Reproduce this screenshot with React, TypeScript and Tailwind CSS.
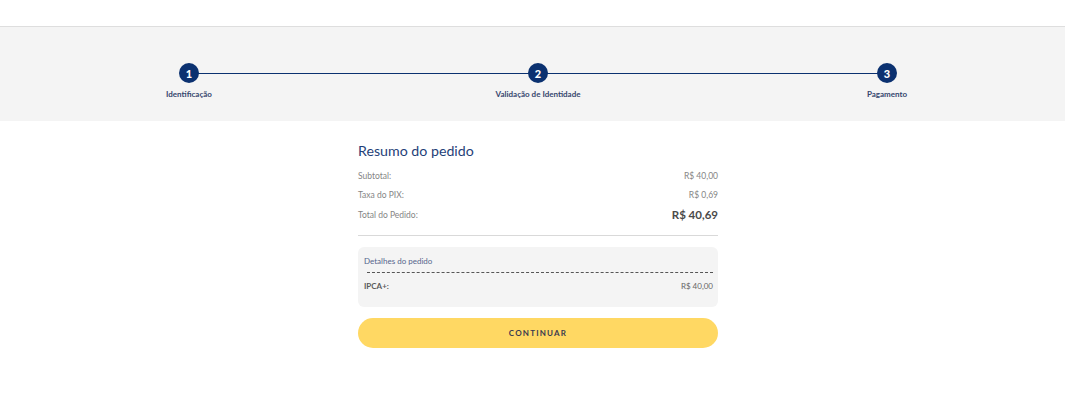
import React from "react";

const steps = [
  { n: 1, label: "Identificação" },
  { n: 2, label: "Validação de Identidade" },
  { n: 3, label: "Pagamento" },
];

export default function App() {
  return (
    <div className="w-[1065px] h-[418px] bg-white font-['Lato',sans-serif] overflow-hidden">
      <div className="h-[27px] border-b border-[#dedede]" />
      <div className="relative h-[94px] bg-[#f4f4f4]">
        <div className="absolute left-[189px] top-[45.5px] w-[698px] h-[1.5px] bg-[#0b3170]" />
        <div className="relative flex pl-[139px] gap-[249px] pt-[36px]">
          {steps.map((s) => (
            <div key={s.n} className="w-[100px] flex flex-col items-center">
              <div className="w-[20px] h-[20px] rounded-full bg-[#0b3170] text-white flex items-center justify-center text-[11px] font-black leading-none">
                {s.n}
              </div>
              <div className="mt-[6px] text-[8px] leading-[10px] font-bold text-[#34466e] whitespace-nowrap">
                {s.label}
              </div>
            </div>
          ))}
        </div>
      </div>
      <div className="flex pl-[358px]">
        <div className="w-[360px] pt-[20px]">
          <div className="h-[20px] flex items-center text-[14.2px] text-[#1f3f78] leading-none">
            Resumo do pedido
          </div>
          <div className="mt-[6px]">
            <div className="h-[19px] flex items-center justify-between text-[8.5px] text-[#858585]">
              <span>Subtotal:</span>
              <span>R$ 40,00</span>
            </div>
            <div className="h-[19px] flex items-center justify-between text-[8.5px] text-[#858585]">
              <span>Taxa do PIX:</span>
              <span>R$ 0,69</span>
            </div>
            <div className="h-[20px] flex items-center justify-between">
              <span className="text-[8.5px] text-[#858585]">Total do Pedido:</span>
              <span className="text-[11.5px] font-bold text-[#4a4a4a]">R$ 40,69</span>
            </div>
          </div>
          <div className="mt-[10px] border-t border-[#d9d9d9]" />
          <div className="mt-[11px] h-[60px] rounded-[6px] bg-[#f4f4f4] pl-[6px] pr-[5px] pt-[8px]">
            <div className="h-[12px] flex items-center text-[8px] text-[#55658c]">
              Detalhes do pedido
            </div>
            <div className="ml-[3px] mt-[5px] border-t border-dashed border-[#555555]" />
            <div className="mt-[7px] h-[12px] flex items-center justify-between text-[8px] text-[#666666]">
              <span className="font-bold text-[#5a5a5a]">IPCA+:</span>
              <span>R$ 40,00</span>
            </div>
          </div>
          <button className="mt-[11px] w-full h-[30px] rounded-full bg-[#ffd863] flex items-center justify-center text-[8px] font-bold tracking-[1.2px] text-[#3b3b4f]">
            CONTINUAR
          </button>
        </div>
      </div>
    </div>
  );
}
